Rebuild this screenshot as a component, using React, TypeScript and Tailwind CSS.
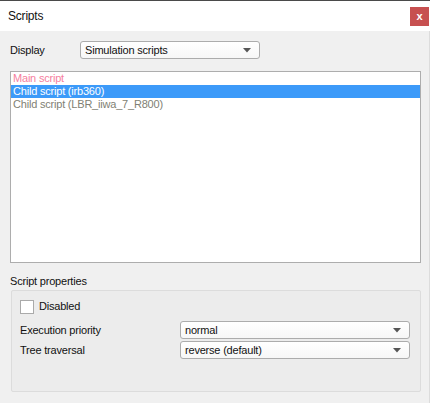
import React from 'react'

function Combo({ value, className }: { value: string; className: string }) {
  return (
    <div
      className={`flex items-center justify-between h-[18px] rounded-[3px] border border-[#acacac] bg-gradient-to-b from-white to-[#f7f7f7] pl-[4px] pr-[8px] ${className}`}
    >
      <span className="leading-none text-[#111]">{value}</span>
      <svg width="8" height="5" viewBox="0 0 8 5">
        <path d="M0 0 H8 L4 4.5 Z" fill="#555" />
      </svg>
    </div>
  )
}

export default function App() {
  const items = [
    { text: 'Main script', cls: 'text-[#f6809e]' },
    { text: 'Child script (irb360)', cls: 'bg-[#3c9af9] text-white' },
    { text: 'Child script (LBR_iiwa_7_R800)', cls: 'text-[#7f7f74]' },
  ]

  return (
    <div className="w-[430px] h-[403px] bg-[#f0f0f0] border-t border-[#4a4a4a] flex flex-col font-['Liberation_Sans',Arial,sans-serif] text-[11px] tracking-[-0.2px] text-[#111] overflow-hidden">
      {/* title bar */}
      <div className="h-[30px] bg-white flex items-center justify-between pl-[8px] pr-[1px] shrink-0">
        <span className="text-[12px]">Scripts</span>
        <div className="w-[19px] h-[19px] bg-[#c75050] flex items-center justify-center text-white text-[11px] font-bold leading-none">
          x
        </div>
      </div>

      <div className="flex-1 flex flex-col pl-[10px] pr-[9px] pt-[10px] border-r border-[#dcdcdc]">
        {/* display row */}
        <div className="flex items-center h-[18px]">
          <span className="w-[70px]">Display</span>
          <Combo value="Simulation scripts" className="w-[180px]" />
        </div>

        {/* script list */}
        <div className="mt-[12px] h-[192px] w-[411px] border border-[#adadad] bg-white flex flex-col">
          {items.map((it) => (
            <div key={it.text} className={`h-[13px] pl-[2px] leading-[13px] ${it.cls}`}>
              {it.text}
            </div>
          ))}
        </div>

        {/* properties */}
        <div className="mt-[10px] h-[17px] leading-[17px]">Script properties</div>
        <div className="ml-[1px] h-[102px] w-[410px] border border-[#dcdcdc] rounded-[2px] bg-[#ececec] flex flex-col pl-[8px] pr-[10px] pt-[8px]">
          <div className="flex items-center gap-[5px] h-[15px]">
            <div className="w-[14px] h-[14px] border border-[#aaa] bg-white" />
            <span>Disabled</span>
          </div>
          <div className="mt-[7px] flex items-center h-[18px]">
            <span className="w-[160px]">Execution priority</span>
            <Combo value="normal" className="flex-1" />
          </div>
          <div className="mt-[2px] flex items-center h-[18px]">
            <span className="w-[160px]">Tree traversal</span>
            <Combo value="reverse (default)" className="flex-1" />
          </div>
        </div>
      </div>
    </div>
  )
}
